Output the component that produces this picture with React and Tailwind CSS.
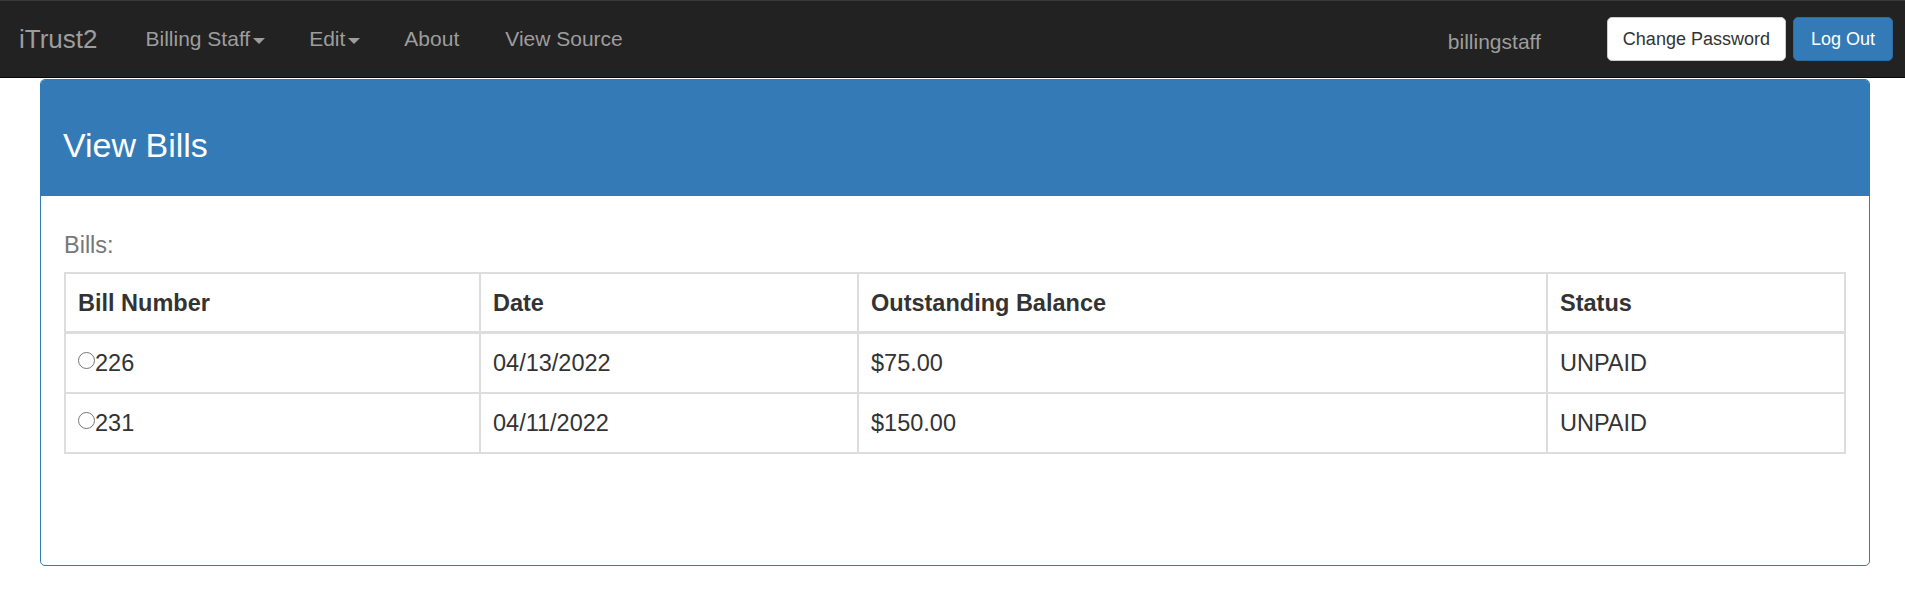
import React from 'react'

const bills = [
  { id: '226', date: '04/13/2022', balance: '$75.00', status: 'UNPAID' },
  { id: '231', date: '04/11/2022', balance: '$150.00', status: 'UNPAID' },
]

function Caret() {
  return (
    <span className="ml-[3px] inline-block h-0 w-0 border-x-[6px] border-t-[6px] border-x-transparent border-t-[#9d9d9d] align-middle" />
  )
}

function NavBar() {
  return (
    <nav className="flex h-[78px] items-center border-t border-b border-t-[#3a3a3a] border-b-[#080808] bg-[#222222] text-[#9d9d9d]">
      <a className="pl-[19px] pr-[25px] text-[26px]">iTrust2</a>
      <a className="pl-[23px] pr-[21px] text-[21px]">
        Billing Staff
        <Caret />
      </a>
      <a className="pl-[23px] pr-[21px] text-[21px]">
        Edit
        <Caret />
      </a>
      <a className="px-[23px] text-[21px]">About</a>
      <a className="px-[23px] text-[21px]">View Source</a>

      <div className="ml-auto flex items-center pr-[12px]">
        <span className="mr-[66px] mt-[6px] text-[21px]">billingstaff</span>
        <button className="h-[44px] rounded-[5px] border border-[#cccccc] bg-white px-[15px] text-[18px] text-[#333333]">
          Change Password
        </button>
        <button className="ml-[7px] h-[44px] rounded-[5px] border border-[#2e6da4] bg-[#337ab7] px-[17px] text-[18px] text-white">
          Log Out
        </button>
      </div>
    </nav>
  )
}

function BillsTable() {
  const th = 'border-r-2 border-b-[3px] border-[#dddddd] px-3 pt-[2px] text-left align-middle font-bold'
  const td = 'border-r-2 border-b-2 border-[#dddddd] px-3 pt-[2px] align-middle'
  return (
    <table className="w-full table-fixed border-separate border-spacing-0 border-t-2 border-l-2 border-[#dddddd] text-[23.5px] leading-[1.43] text-[#333333]">
      <thead>
        <tr className="h-[60px]">
          <th className={`${th} w-[415px]`}>Bill Number</th>
          <th className={`${th} w-[378px]`}>Date</th>
          <th className={`${th} w-[689px]`}>Outstanding Balance</th>
          <th className={th}>Status</th>
        </tr>
      </thead>
      <tbody>
        {bills.map((bill) => (
          <tr key={bill.id} className="h-[60px]">
            <td className={td}>
              <input
                type="radio"
                name="bill"
                className="m-0 inline-block h-[17px] w-[17px] appearance-none rounded-full border border-[#767676] bg-white align-[2px]"
              />
              {bill.id}
            </td>
            <td className={td}>{bill.date}</td>
            <td className={td}>{bill.balance}</td>
            <td className={td}>{bill.status}</td>
          </tr>
        ))}
      </tbody>
    </table>
  )
}

export default function App() {
  return (
    <div className="min-h-[599px] bg-white font-['Liberation_Sans',Arial,sans-serif]">
      <NavBar />
      <div className="pl-[40px] pr-[35px] pt-[1px]">
        <div className="overflow-hidden rounded-[5px] border border-[#337ab7]">
          <div className="h-[116px] bg-[#337ab7] pl-[22px] pt-[47px]">
            <h3 className="text-[34px] leading-[1.1] text-white">View Bills</h3>
          </div>
          <div className="px-[23px] pb-[111px] pt-[35px]">
            <p className="mb-[13px] text-[23.5px] leading-[1.2] text-[#777777]">Bills:</p>
            <BillsTable />
          </div>
        </div>
      </div>
    </div>
  )
}
